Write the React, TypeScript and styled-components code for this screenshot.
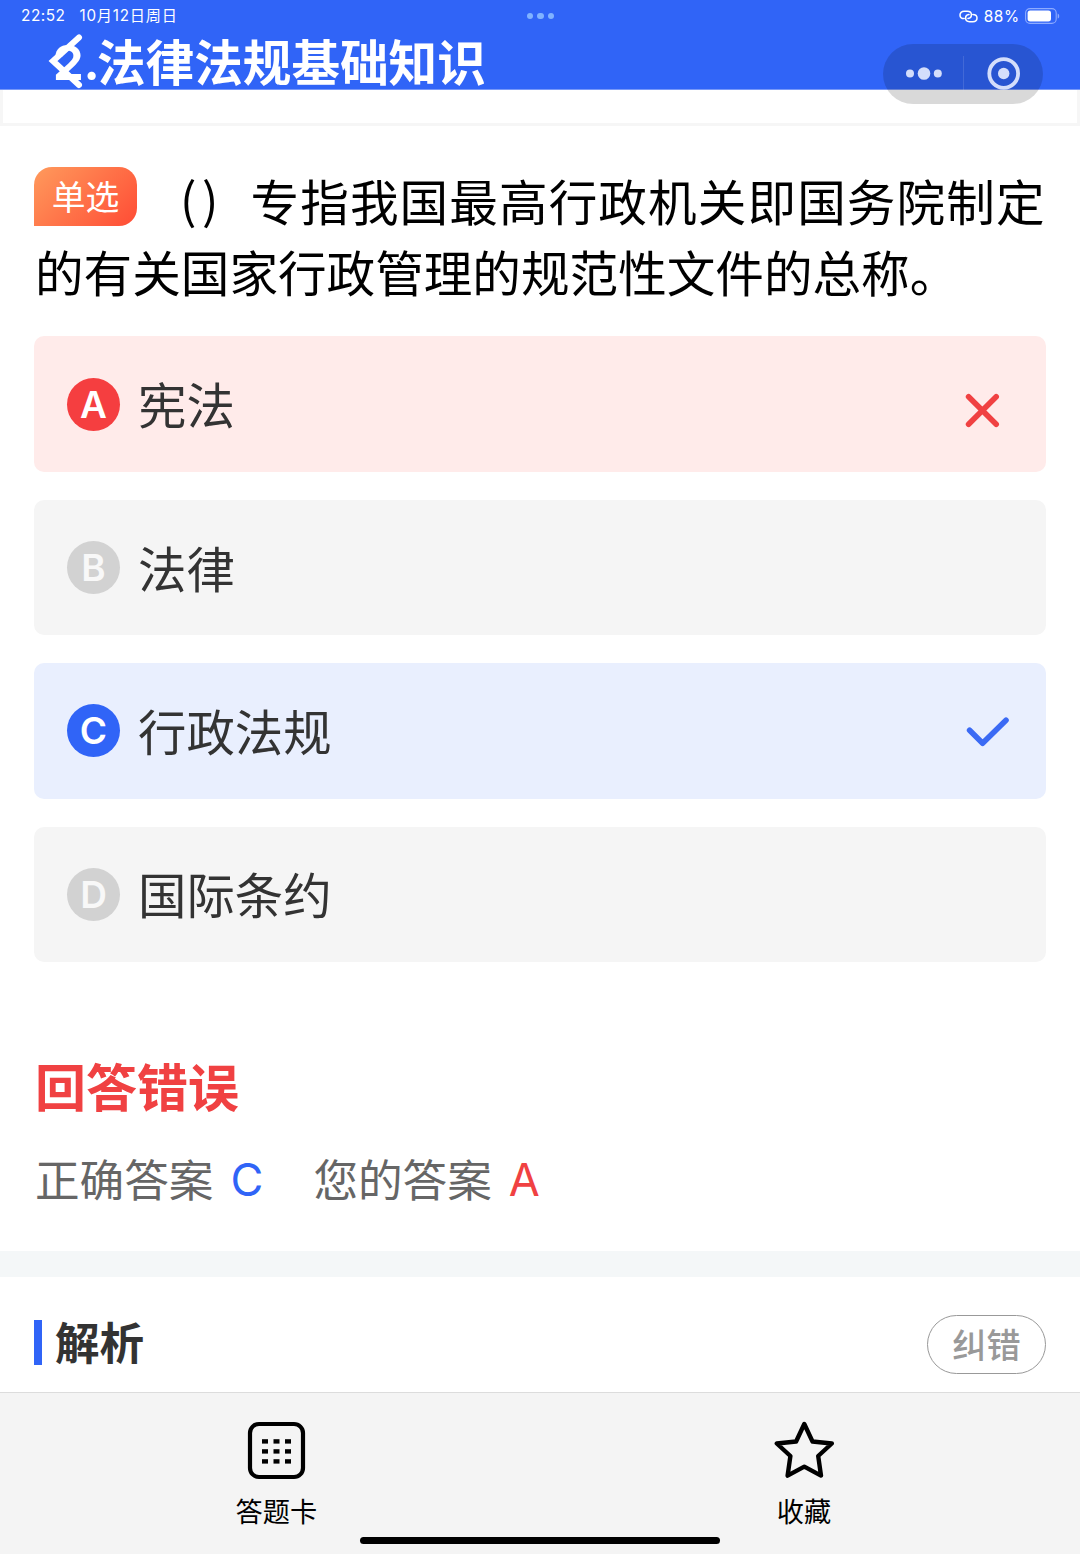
import React from "react";
import styled, { createGlobalStyle } from "styled-components";

const cjk = `"Noto Sans CJK SC", sans-serif`;

const Global = createGlobalStyle`
  * { box-sizing: border-box; }
  body { margin: 0; background: #fff; font-family: Inter, ${cjk}; }
`;

const Screen = styled.div`
  position: relative;
  display: flex;
  flex-direction: column;
  width: 1080px;
  height: 1554px;
  overflow: hidden;
  background: #fff;
`;

const Header = styled.header`
  height: 90px;
  flex: none;
  background: #3064f7;
  border-bottom: 1px solid #7898f8;
  color: #fff;
`;

const StatusBar = styled.div`
  display: grid;
  grid-template-columns: 1fr auto 1fr;
  align-items: center;
  height: 32px;
  padding: 0 20px 0 21px;
  font-size: 15.4px;
  letter-spacing: 0.5px;
`;

const StatusLeft = styled.div`
  display: flex;
  gap: 14px;
  line-height: 20px;
`;

const DateText = styled.span`
  font: 400 15.2px/20px Inter, ${cjk};
  letter-spacing: 0.8px;
`;

const StatusDots = styled.div`
  display: flex;
  gap: 4px;
  i {
    width: 6.6px;
    height: 6.6px;
    border-radius: 50%;
    background: #80b2ff;
  }
`;

const StatusRight = styled.div`
  display: flex;
  justify-content: flex-end;
  align-items: center;
  gap: 5.5px;
`;

const TitleRow = styled.div`
  position: relative;
  display: flex;
  align-items: center;
  height: 57px;
  padding-left: 53px;
`;

const Title = styled.h1`
  display: flex;
  margin: 6px 0 0;
  font: 700 48.6px/57px Inter, ${cjk};
  white-space: nowrap;
`;

const TitleNumber = styled.span`
  width: 44px;
  font-size: 48.6px;
  line-height: 55px;
`;

const BackIcon = styled.svg`
  position: absolute;
  left: 46px;
  top: 0;
`;

const Capsule = styled.div`
  position: absolute;
  left: 883px;
  top: 44px;
  width: 160px;
  height: 60px;
  border-radius: 30px;
  background: rgba(0, 0, 0, 0.15);
`;

const ScrolledCard = styled.div`
  flex: none;
  height: 36px;
  border: solid #f6f6f6;
  border-width: 0 3px 3px;
`;

const Question = styled.section`
  flex: none;
  height: 210px;
  padding: 39px 0 0 35px;
  color: #000;
`;

const QuestionLine = styled.div<{ $spacing: number }>`
  display: flex;
  height: 71px;
  align-items: center;
  font: 400 48.6px/71px ${cjk};
  letter-spacing: ${(p) => p.$spacing}px;
  white-space: nowrap;
`;

const Tag = styled.span`
  display: flex;
  align-items: center;
  justify-content: center;
  width: 103px;
  height: 59px;
  margin: -9px 0 0 -1px;
  border-radius: 18px 18px 18px 0;
  background: linear-gradient(135deg, #ff9a5c 0%, #ff4c35 100%);
  color: #fff;
  font: 400 33.8px/57px ${cjk};
  letter-spacing: 0;
  padding-bottom: 2px;
`;

const Brackets = styled.span`
  width: 113.5px;
  padding-left: 43px;
  letter-spacing: 5.5px;
  font-size: 48.6px;
  line-height: 66px;
  height: 71px;
`;

const Options = styled.ul`
  flex: none;
  display: flex;
  flex-direction: column;
  gap: 27.7px;
  margin: 0;
  padding: 0.4px 34px 0;
  list-style: none;
`;

type State = "wrong" | "right" | "idle";
const rowBg = { wrong: "#ffebea", right: "#e9effe", idle: "#f5f5f5" };
const badgeBg = { wrong: "#f53e40", right: "#3064f7", idle: "#d2d2d2" };

const Option = styled.li<{ $state: State }>`
  display: flex;
  align-items: center;
  height: 135.7px;
  padding: 0 34px 0 33px;
  border-radius: 10px;
  background: ${(p) => rowBg[p.$state]};
`;

const Badge = styled.span<{ $state: State }>`
  display: flex;
  align-items: center;
  justify-content: center;
  width: 53px;
  height: 53px;
  margin-right: 18px;
  border-radius: 50%;
  background: ${(p) => badgeBg[p.$state]};
  color: ${(p) => (p.$state === "idle" ? "#f8f8f8" : "#fff")};
  font: 600 37px/53px Inter, sans-serif;
`;

const OptionText = styled.span`
  flex: 1;
  padding-bottom: 2px;
  color: #333;
  font: 400 48.4px/70px ${cjk};
`;

const Result = styled.section`
  flex: none;
  height: 288.6px;
  padding: 84.6px 35px 0;
`;

const ResultTitle = styled.h2`
  margin: 0;
  color: #f04142;
  font: 700 51px/76px ${cjk};
`;

const Answers = styled.div`
  display: flex;
  align-items: center;
  height: 66px;
  margin-top: 22px;
  color: #666;
  font: 400 44.6px/66px ${cjk};
`;

const Letter = styled.span<{ $color: string; $width: number }>`
  width: ${(p) => p.$width}px;
  padding: 4px 0 0 17px;
  color: ${(p) => p.$color};
  font: 400 45px/66px Inter, sans-serif;
`;

const Divider = styled.div`
  flex: none;
  height: 26px;
  background: #f4f7f8;
`;

const Analysis = styled.section`
  flex: none;
  display: flex;
  justify-content: space-between;
  height: 115px;
  padding: 0 34px;
`;

const AnalysisTitle = styled.h2`
  height: 45px;
  margin: 43px 0 0;
  padding-left: 13px;
  border-left: 8px solid #3064f7;
  color: #333;
  font: 700 44.6px/41px ${cjk};
`;

const FixButton = styled.button`
  width: 119px;
  height: 59px;
  margin: 38px 0 0;
  padding: 0 0 2px;
  border: 1.4px solid #999;
  border-radius: 30px;
  background: #fff;
  color: #999;
  font: 500 34.2px/54px ${cjk};
`;

const TabBar = styled.nav`
  position: relative;
  flex: 1;
  display: flex;
  justify-content: space-between;
  padding: 27px 246px 0 235.5px;
  border-top: 1px solid #dcdcdc;
  background: #f4f4f4;
`;

const Tab = styled.div`
  display: flex;
  flex-direction: column;
  align-items: center;
  color: #000;
  font: 400 27.2px/40px ${cjk};
  svg { display: block; margin-bottom: 10px; }
`;

const HomeIndicator = styled.div`
  position: absolute;
  left: 360px;
  bottom: 10px;
  width: 360px;
  height: 7px;
  border-radius: 4px;
  background: #000;
`;

const CrossIcon = () => (
  <svg width="60" height="60" viewBox="0 0 60 60" fill="none" stroke="#f04142" strokeWidth="5.6" strokeLinecap="round">
    <path d="M16.6 22.8 44.2 50.2M44.2 22.8 16.6 50.2" />
  </svg>
);

const CheckIcon = () => (
  <svg width="60" height="60" viewBox="0 0 60 60" fill="none" stroke="#3b6af4" strokeWidth="5.6" strokeLinecap="round" strokeLinejoin="round">
    <path d="M17.6 29.3 30.6 42.2 54 19.2" />
  </svg>
);

const options: { key: string; text: string; state: State }[] = [
  { key: "A", text: "宪法", state: "wrong" },
  { key: "B", text: "法律", state: "idle" },
  { key: "C", text: "行政法规", state: "right" },
  { key: "D", text: "国际条约", state: "idle" },
];

export default function App() {
  return (
    <>
      <Global />
      <Screen>
        <Header>
          <StatusBar>
            <StatusLeft>
              <span>22:52</span>
              <DateText>10月12日周日</DateText>
            </StatusLeft>
            <StatusDots><i /><i /><i /></StatusDots>
            <StatusRight>
              <svg width="19" height="13" viewBox="0 0 19 13" fill="none" stroke="#fff" strokeWidth="1.5" strokeLinecap="round">
                <path d="M5.2 8.6C2.6 8.6 1 7 1 4.9S2.6 1.3 5.2 1.3h3.2c2.4 0 4 1.4 4 3.6 0 2-1.4 3.3-3.4 3.5" />
                <path d="M13.8 4.4c2.6 0 4.2 1.4 4.2 3.6s-1.6 3.7-4.2 3.7h-3.2c-2.4 0-4-1.5-4-3.6 0-2 1.4-3.3 3.4-3.5" />
              </svg>
              <span>88%</span>
              <svg width="35" height="16" viewBox="0 0 35 16">
                <rect x=".6" y=".6" width="30.6" height="14.8" rx="4.4" fill="none" stroke="#8dabff" strokeWidth="1.1" />
                <rect x="2.6" y="2.6" width="23.4" height="10.8" rx="2.6" fill="#fff" />
                <path d="M32.7 5.4c2 .8 2 4.4 0 5.2z" fill="#8dabff" />
              </svg>
            </StatusRight>
          </StatusBar>
          <TitleRow>
            <BackIcon width="40" height="57" viewBox="0 0 40 57" fill="none" stroke="#fff" strokeWidth="6" strokeLinecap="round">
              <path d="M33 5.5 7 29 33 53" />
            </BackIcon>
            <Title><TitleNumber>2.</TitleNumber>法律法规基础知识</Title>
          </TitleRow>
        </Header>

        <ScrolledCard />

        <Question>
          <QuestionLine $spacing={1.1}>
            <Tag>单选</Tag>
            <Brackets>()</Brackets>
            <span>专指我国最高行政机关即国务院制定</span>
          </QuestionLine>
          <QuestionLine $spacing={0}>的有关国家行政管理的规范性文件的总称。</QuestionLine>
        </Question>

        <Options>
          {options.map((o) => (
            <Option key={o.key} $state={o.state}>
              <Badge $state={o.state}>{o.key}</Badge>
              <OptionText>{o.text}</OptionText>
              {o.state === "wrong" && <CrossIcon />}
              {o.state === "right" && <CheckIcon />}
            </Option>
          ))}
        </Options>

        <Result>
          <ResultTitle>回答错误</ResultTitle>
          <Answers>
            正确答案
            <Letter $color="#3064f7" $width={100}>C</Letter>
            您的答案
            <Letter $color="#f04142" $width={60}>A</Letter>
          </Answers>
        </Result>

        <Divider />

        <Analysis>
          <AnalysisTitle>解析</AnalysisTitle>
          <FixButton>纠错</FixButton>
        </Analysis>

        <TabBar>
          <Tab>
            <svg width="60" height="60" viewBox="0 0 60 60">
              <rect x="4" y="4" width="53" height="53" rx="9" fill="none" stroke="#000" strokeWidth="4.2" />
              {[19.2, 29.2, 39.2].map((y) =>
                [16, 27.5, 39].map((x) => <rect key={`${x}-${y}`} x={x} y={y} width="6" height="4.4" />)
              )}
            </svg>
            答题卡
          </Tab>
          <Tab>
            <svg width="60" height="60" viewBox="0 0 60 60" fill="none" stroke="#000" strokeWidth="4.4" strokeLinejoin="round">
              <path d="M30.3 4 38.5 21.5 57.8 23.5 44.2 36 47 55.6 30.3 46.6 13.6 55.6 16.4 36 2.8 23.5 22.1 21.5Z" />
            </svg>
            收藏
          </Tab>
          <HomeIndicator />
        </TabBar>

        <Capsule>
          <svg width="160" height="60" viewBox="0 0 160 60" fill="#d4defb">
            <circle cx="27" cy="29.5" r="4" />
            <circle cx="41" cy="29.5" r="6.3" />
            <circle cx="54.8" cy="29.5" r="4" />
            <rect x="80" y="12" width="1" height="36" opacity=".15" />
            <circle cx="120.7" cy="29.5" r="5.7" />
            <circle cx="120.7" cy="29.5" r="14.4" fill="none" stroke="#d4defb" strokeWidth="3.8" />
          </svg>
        </Capsule>
      </Screen>
    </>
  );
}
